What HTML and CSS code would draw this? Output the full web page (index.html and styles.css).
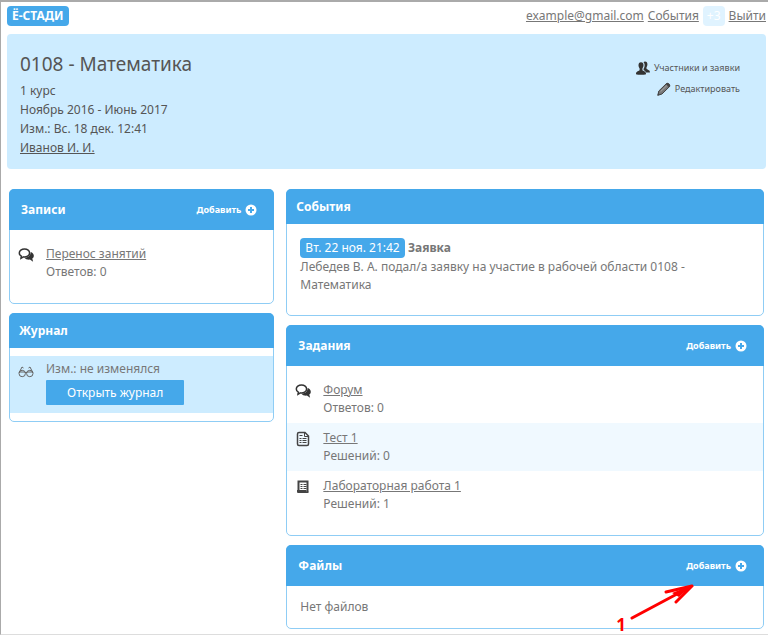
FILE: index.html
```html
<!DOCTYPE html>
<html lang="ru">
<head>
  <meta charset="UTF-8">
  <title>0108 - Математика</title>
  <meta name="viewport" content="width=device-width, initial-scale=1.0">
  <link rel="stylesheet" href="styles.css">
</head>
<body>
  <!-- shared icons -->
  <svg class="sprite" aria-hidden="true">
    <symbol id="i-comments" viewBox="0 0 16 16">
      <path d="M6.500 2C3.600 2 1.300 3.700 1.300 6c0 1.400.8 2.500 2 3.200L3 11.300l2.400-1.400c2.900.4 6.200-1 6.200-3.900 0-2.300-2.200-4-5.100-4z" fill="none" stroke="#333" stroke-width="1.500"/>
      <path d="M12.600 5c2 .6 3.200 1.900 3.200 3.700 0 1.300-.6 2.200-1.500 2.900l.8 3.100-3.200-2.100c-2.300.2-4.500-.4-5.500-1.900 3.500 0 6.300-2.200 6.200-5.700z" fill="#333"/>
    </symbol>
    <symbol id="i-plus" viewBox="0 0 12 12">
      <circle cx="6" cy="6" r="5.500" fill="#fff"/>
      <path d="M6 3v6M3 6h6" stroke="#45a8ea" stroke-width="2"/>
    </symbol>
  </svg>

  <header class="topbar">
    <a href="#" class="logo">Ё-СТАДИ</a>
    <nav class="user-nav">
      <a href="#">example@gmail.com</a>
      <a href="#">События</a>
      <span class="counter">+3</span>
      <a href="#">Выйти</a>
    </nav>
  </header>

  <section class="course">
    <div class="course-info">
      <h1>0108 - Математика</h1>
      <p>1 курс</p>
      <p>Ноябрь 2016 - Июнь 2017</p>
      <p>Изм.: Вс. 18 дек. 12:41</p>
      <p><a href="#">Иванов И. И.</a></p>
    </div>
    <div class="course-actions">
      <a href="#">
        <svg width="14" height="14" viewBox="0 0 14 14" fill="#333">
          <path d="M9 .6c1.700 0 2.500 1.200 2.400 2.900 0 1.300-.5 2-.9 2.700v1.500c.4 1 3.200 1 3.400 3.100v.8H9.800C9.500 9.900 8.300 9.500 7.600 9V7.800c.9-1.200 1.300-3 .9-4.800C8.300 2.100 8 1.600 7.500 1.200 7.900.8 8.400.6 9 .6z"/>
          <path d="M5 1.300c1.700 0 2.600 1.300 2.500 3 0 1.500-.6 2.400-1.100 3.100v1.500c.5 1.200 3.500 1.200 3.600 3.500v.9c-2 .7-8 .7-10 0v-.9c.1-2.300 3.100-2.300 3.600-3.500V7.400c-.5-.7-1.100-1.600-1.100-3.100 0-1.700.8-3 2.500-3z"/>
        </svg>
        Участники и заявки
      </a>
      <a href="#">
        <svg width="14" height="14" viewBox="0 0 14 14">
          <path d="M.8 13.300l1-4.300L9.500 1.500c1.200-1 4 1.400 3.200 2.900L5 12z" fill="#777" stroke="#444"/>
          <path d="M.5 13.600l.7-2.500 1.600 1.700zM8.800 2L12 5.200l1-1.300c.5-1.500-1.800-3.500-3.200-2.800z" fill="#444"/>
          <path d="M3.500 9.700l6.300-6" stroke="#aaa"/>
        </svg>
        Редактировать
      </a>
    </div>
  </section>

  <main class="columns">
    <div class="column">
      <section class="panel">
        <div class="panel-head with-action">
          <h2>Записи</h2>
          <a href="#" class="add">Добавить <svg width="12" height="12"><use href="#i-plus"/></svg></a>
        </div>
        <ul class="items">
          <li>
            <svg class="icon" width="16" height="16"><use href="#i-comments"/></svg>
            <div><a href="#">Перенос занятий</a><br>Ответов: 0</div>
          </li>
        </ul>
      </section>

      <section class="panel">
        <div class="panel-head"><h2>Журнал</h2></div>
        <div class="journal">
          <svg class="icon" width="16" height="16" viewBox="0 0 16 16" fill="none" stroke="#666">
            <circle cx="4.200" cy="9.500" r="3.200"/>
            <circle cx="11.800" cy="9.500" r="3.200"/>
            <path d="M1 9l3-6 1.500 1M15 9l-3-6-1.500 1M7 8.500h2M1 8h6M9 8h6"/>
          </svg>
          <div>
            <p>Изм.: не изменялся</p>
            <button type="button">Открыть журнал</button>
          </div>
        </div>
      </section>
    </div>

    <div class="column">
      <section class="panel">
        <div class="panel-head"><h2>События</h2></div>
        <div class="event">
          <p><span class="date">Вт. 22 ноя. 21:42</span> <b>Заявка</b></p>
          <p>Лебедев В. А. подал/а заявку на участие в рабочей области 0108 - Математика</p>
        </div>
      </section>

      <section class="panel">
        <div class="panel-head with-action">
          <h2>Задания</h2>
          <a href="#" class="add">Добавить <svg width="12" height="12"><use href="#i-plus"/></svg></a>
        </div>
        <ul class="items">
          <li>
            <svg class="icon" width="16" height="16"><use href="#i-comments"/></svg>
            <div><a href="#">Форум</a><br>Ответов: 0</div>
          </li>
          <li>
            <svg class="icon" width="16" height="16" viewBox="0 0 16 16" fill="none" stroke="#444">
              <path d="M4 1.500h6L13.500 5v8c0 1-.5 1.500-1.500 1.500H4c-1 0-1.500-.5-1.500-1.500V3c0-1 .5-1.500 1.500-1.500z" stroke-width="1.500"/>
              <path d="M9.500 2v3.500H13M4.500 4.500h3M4.500 7.500h2M7.500 7.500h4M4.500 9.500h2M7.500 9.500h4M4.500 11.500h2M7.500 11.500h4"/>
            </svg>
            <div><a href="#">Тест 1</a><br>Решений: 0</div>
          </li>
          <li>
            <svg class="icon" width="16" height="16" viewBox="0 0 16 16" fill="none" stroke="#444">
              <path d="M3.500 11V2.500h9V13" stroke-width="2"/>
              <path d="M5.500 5.500h2M8.500 5.500h3M5.500 7.500h2M8.500 7.500h3M5.500 9.500h2M8.500 9.500h3"/>
              <path d="M2 11h9.500v1.500h2V14H3.500C2.500 14 2 13.500 2 12.500z" fill="#444" stroke="none"/>
            </svg>
            <div><a href="#">Лабораторная работа 1</a><br>Решений: 1</div>
          </li>
        </ul>
      </section>

      <section class="panel files">
        <div class="panel-head with-action">
          <h2>Файлы</h2>
          <a href="#" class="add">Добавить <svg width="12" height="12"><use href="#i-plus"/></svg></a>
        </div>
        <p class="empty">Нет файлов</p>
        <div class="callout">
          <span>1</span>
          <svg width="64" height="38" viewBox="0 0 64 38" fill="none" stroke="#f00" stroke-width="3" stroke-linecap="round" stroke-linejoin="round">
            <path d="M2 35L62 3M36 9L62 3 46 19"/>
            <path d="M62 2L42 10 49 14z" fill="#f00" stroke="none"/>
          </svg>
        </div>
      </section>
    </div>
  </main>
</body>
</html>
```

FILE: styles.css
```css
* {
  box-sizing: border-box;
}

body {
  margin: 0;
  padding: 4px 2px 5px 6px;
  border-top: 2px solid #aaa;
  border-left: 1px solid #aaa;
  border-bottom: 1px solid #ddd;
  background: #fff;
  color: #777;
  font: 12px/18px "Noto Sans", "Open Sans", sans-serif;
}

h1, h2, p, ul {
  margin: 0;
  padding: 0;
}

a {
  color: inherit;
}

.sprite {
  display: none;
}

.topbar {
  display: flex;
  justify-content: space-between;
  align-items: center;
  margin-bottom: 8px;
  line-height: 20px;
}

.logo {
  padding: 0 5px;
  border-radius: 4px;
  background: #45a8ea;
  color: #fff;
  font-weight: bold;
  text-decoration: none;
}

.user-nav {
  display: flex;
  gap: 4px;
}

.counter {
  padding: 0 4px;
  border-radius: 4px;
  background: #e0f3ff;
  color: #fff;
}

.course {
  display: flex;
  justify-content: space-between;
  padding: 16px 26px 12px 13px;
  border-radius: 4px;
  background: #cdecff;
  color: #555;
}

h1 {
  margin-bottom: 2px;
  font-size: 19px;
  font-weight: normal;
  line-height: 29px;
}

.course-info p {
  line-height: 19px;
}

.course-actions {
  display: flex;
  flex-direction: column;
  align-items: flex-end;
  gap: 7px;
  padding-top: 11px;
}

.course-actions a {
  display: flex;
  align-items: center;
  gap: 4px;
  font-size: 9px;
  line-height: 14px;
  text-decoration: none;
}

.columns {
  display: grid;
  grid-template-columns: 5fr 9fr;
  align-items: start;
  gap: 12px;
  margin-top: 20px;
  padding: 0 2px;
}

.column {
  display: grid;
  gap: 9px;
}

.panel {
  border: 1px solid #8fcdf5;
  border-radius: 5px;
}

.panel-head {
  display: flex;
  justify-content: space-between;
  align-items: center;
  height: 35px;
  margin: -1px -1px 0;
  padding: 0 10px;
  border-radius: 5px 5px 0 0;
  background: #45a8ea;
  color: #fff;
}

.with-action {
  height: 41px;
  padding: 0 17px 0 12px;
}

h2 {
  font-size: 12px;
  font-weight: bold;
}

.add {
  display: flex;
  align-items: center;
  gap: 4px;
  font-size: 9px;
  font-weight: bold;
  text-decoration: none;
}

.items {
  padding: 9px 0 16px;
  list-style: none;
}

.items li {
  display: flex;
  gap: 12px;
  padding: 6px 8px;
}

.items li:nth-child(even) {
  background: #f0f9ff;
}

.icon {
  flex: none;
  margin-top: 2px;
}

.journal {
  display: flex;
  gap: 12px;
  margin: 8px 0;
  padding: 4px 8px 8px;
  background: #cdecff;
}

.journal .icon {
  margin-top: 4px;
}

.journal button {
  display: block;
  margin-top: 2px;
  padding: 0 21px;
  border: 0;
  border-radius: 1px;
  background: #45a8ea;
  color: #fff;
  font: inherit;
  line-height: 25px;
}

.event {
  padding: 14px 50px 21px 13px;
}

.date {
  display: inline-block;
  padding: 0 5px;
  border-radius: 4px;
  background: #45a8ea;
  color: #fff;
  line-height: 20px;
}

.files {
  position: relative;
}

.empty {
  padding: 12px 13px;
}

/* arrow pointing at the add link */
.callout {
  position: absolute;
  right: 69px;
  bottom: -7px;
  display: flex;
  align-items: flex-end;
  gap: 4px;
  color: #f00;
  font-size: 17px;
  font-weight: bold;
  line-height: 20px;
}

.callout svg {
  margin-bottom: 14px;
}
```
